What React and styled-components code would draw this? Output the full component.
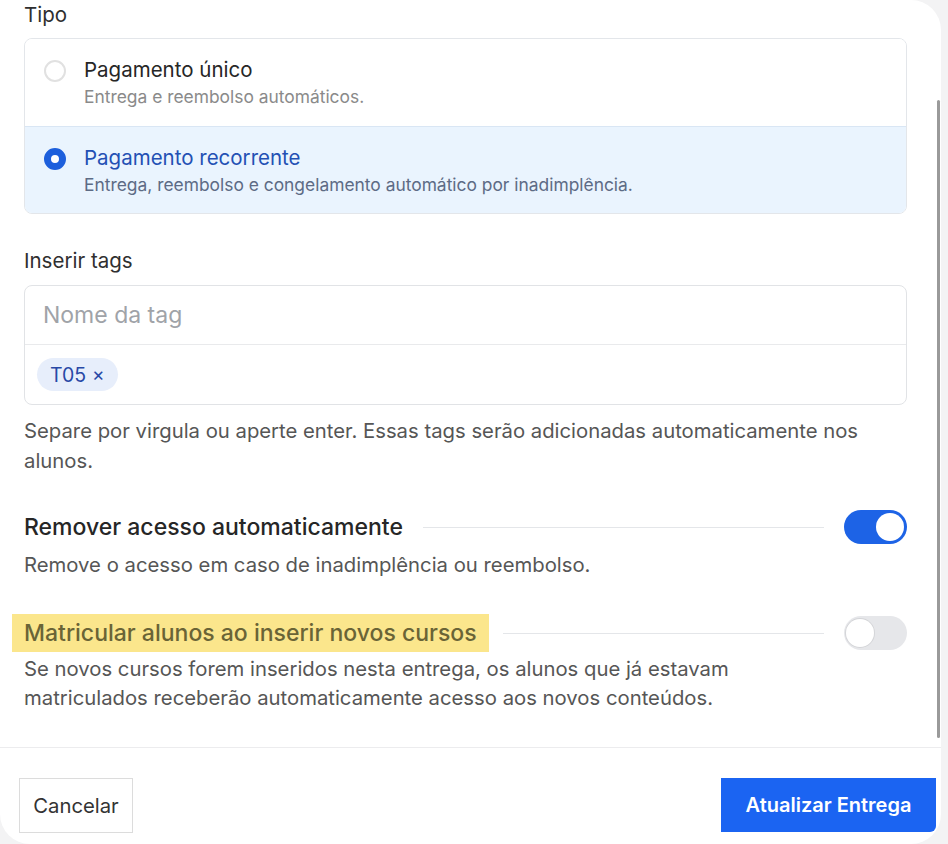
import React, { useState } from 'react';
import styled, { createGlobalStyle } from 'styled-components';

const GlobalStyle = createGlobalStyle`
  html, body {
    margin: 0;
    padding: 0;
    background: #f3f3f4;
  }
  body {
    font-family: Inter, "Noto Sans", "Liberation Sans", sans-serif;
    color: #2b2b2b;
  }
  * { box-sizing: border-box; }
`;

const Panel = styled.div`
  position: relative;
  width: 941px;
  height: 844px;
  background: #ffffff;
  border-radius: 0 30px 30px 30px;
  display: flex;
  flex-direction: column;
  overflow: hidden;
`;

const Body = styled.div`
  flex: 1;
  padding: 3px 34px 0 24px;
`;

const Label = styled.div`
  font-size: 20.5px;
  line-height: 24px;
  color: #2f2f2f;
  margin-top: ${p => p.$mt || 0}px;
  margin-bottom: ${p => p.$mb || 11}px;
`;

const OptionGroup = styled.div`
  border: 1px solid #e3e6ea;
  border-radius: 8px;
  overflow: hidden;
`;

const Option = styled.div`
  display: flex;
  gap: 18px;
  padding: 18px 18px 16px 19px;
  height: 87px;
  background: ${p => (p.$selected ? '#eaf4fe' : '#ffffff')};
  border-top: ${p => (p.$first ? 'none' : '1px solid #d9e6f4')};
  cursor: pointer;
`;

const Radio = styled.span`
  flex: none;
  width: 22px;
  height: 22px;
  margin-top: 3px;
  border-radius: 50%;
  border: ${p => (p.$checked ? '7px solid #1d5fdc' : '2px solid #e1e1e1')};
  background: #fff;
`;

const OptionText = styled.div`
  display: flex;
  flex-direction: column;
  gap: 3px;
`;

const OptionTitle = styled.div`
  font-size: 20.5px;
  line-height: 26px;
  color: ${p => (p.$selected ? '#2350b4' : '#262626')};
`;

const OptionDesc = styled.div`
  font-size: 17.4px;
  line-height: 22px;
  color: ${p => (p.$selected ? '#5d6b85' : '#8a8a8a')};
`;

const TagBox = styled.div`
  border: 1px solid #e1e3e6;
  border-radius: 8px;
`;

const TagInput = styled.input`
  display: block;
  width: 100%;
  height: 59px;
  border: none;
  border-bottom: 1px solid #e9eaec;
  background: transparent;
  padding: 0 18px;
  font-family: inherit;
  font-size: 23px;
  color: #333;
  outline: none;
  &::placeholder { color: #a0a3a8; }
`;

const TagRow = styled.div`
  height: 59px;
  display: flex;
  align-items: center;
  padding: 0 12px;
`;

const Chip = styled.span`
  display: inline-flex;
  align-items: center;
  gap: 6px;
  height: 33px;
  padding: 0 13px;
  border-radius: 17px;
  background: #e7eefb;
  color: #2848a6;
  font-size: 19.5px;
`;

const ChipX = styled.span`
  font-size: 19px;
  line-height: 1;
`;

const Help = styled.p`
  margin: ${p => p.$mt || 0}px 0 0;
  max-width: ${p => p.$max || 882}px;
  font-size: 20.3px;
  line-height: ${p => p.$lh || 30}px;
  color: #565656;
`;

const SettingRow = styled.div`
  display: flex;
  align-items: center;
  height: 38px;
  margin-top: ${p => p.$mt}px;
`;

const SettingTitle = styled.span`
  font-size: 23px;
  font-weight: 500;
  line-height: 38px;
  padding: 0 12px;
  margin-left: -12px;
  color: ${p => (p.$highlight ? '#6a6436' : '#262626')};
  background: ${p => (p.$highlight ? '#fbe68c' : 'transparent')};
  white-space: nowrap;
`;

const Rule = styled.span`
  flex: 1;
  height: 1px;
  background: #e4e6e9;
  margin: 0 20px 0 ${p => (p.$highlight ? 14 : 8)}px;
`;

const Track = styled.button`
  flex: none;
  position: relative;
  width: 63px;
  height: 34px;
  border-radius: 17px;
  border: none;
  padding: 0;
  cursor: pointer;
  background: ${p => (p.$on ? '#1d63e6' : '#e6e7ea')};
`;

const Knob = styled.span`
  position: absolute;
  top: 3px;
  left: ${p => (p.$on ? 32 : 2)}px;
  width: 28px;
  height: 28px;
  border-radius: 50%;
  background: #fff;
  box-shadow: 0 0 0 1px ${p => (p.$on ? 'transparent' : '#d4d5d8')};
`;

const Footer = styled.div`
  height: 97px;
  border-top: 1.5px solid #ececee;
  display: flex;
  justify-content: space-between;
  align-items: flex-start;
  padding: 30px 5px 0 19px;
`;

const CancelButton = styled.button`
  width: 114px;
  height: 55px;
  background: #fff;
  border: 1.5px solid #dcdcdc;
  font-family: inherit;
  font-size: 20.3px;
  color: #333;
  cursor: pointer;
`;

const PrimaryButton = styled.button`
  width: 215px;
  height: 54px;
  background: #1b64f2;
  border: none;
  border-radius: 0 0 6px 0;
  font-family: inherit;
  font-size: 20px;
  font-weight: 600;
  color: #fff;
  cursor: pointer;
`;

const Scrollbar = styled.div`
  position: absolute;
  top: 100px;
  right: 1px;
  width: 3px;
  height: 638px;
  background: #9a9a9a;
  border-radius: 2px;
`;

function Toggle({ on, onClick }) {
  return (
    <Track $on={on} onClick={onClick} aria-pressed={on}>
      <Knob $on={on} />
    </Track>
  );
}

export default function App() {
  const [tipo, setTipo] = useState('recorrente');
  const [remover, setRemover] = useState(true);
  const [matricular, setMatricular] = useState(false);

  const options = [
    { id: 'unico', title: 'Pagamento único', desc: 'Entrega e reembolso automáticos.' },
    { id: 'recorrente', title: 'Pagamento recorrente', desc: 'Entrega, reembolso e congelamento automático por inadimplência.' },
  ];

  return (
    <>
      <GlobalStyle />
      <Panel>
        <Body>
          <Label>Tipo</Label>
          <OptionGroup>
            {options.map((o, i) => (
              <Option
                key={o.id}
                $first={i === 0}
                $selected={tipo === o.id}
                onClick={() => setTipo(o.id)}
              >
                <Radio $checked={tipo === o.id} />
                <OptionText>
                  <OptionTitle $selected={tipo === o.id}>{o.title}</OptionTitle>
                  <OptionDesc $selected={tipo === o.id}>{o.desc}</OptionDesc>
                </OptionText>
              </Option>
            ))}
          </OptionGroup>

          <Label $mt={35} $mb={12}>Inserir tags</Label>
          <TagBox>
            <TagInput placeholder="Nome da tag" />
            <TagRow>
              <Chip>T05 <ChipX>×</ChipX></Chip>
            </TagRow>
          </TagBox>
          <Help $mt={11}>
            Separe por virgula ou aperte enter. Essas tags serão adicionadas automaticamente nos alunos.
          </Help>

          <SettingRow $mt={32}>
            <SettingTitle>Remover acesso automaticamente</SettingTitle>
            <Rule />
            <Toggle on={remover} onClick={() => setRemover(!remover)} />
          </SettingRow>
          <Help $mt={4}>Remove o acesso em caso de inadimplência ou reembolso.</Help>

          <SettingRow $mt={34}>
            <SettingTitle $highlight>Matricular alunos ao inserir novos cursos</SettingTitle>
            <Rule $highlight />
            <Toggle on={matricular} onClick={() => setMatricular(!matricular)} />
          </SettingRow>
          <Help $mt={2} $lh={29} $max={760}>
            Se novos cursos forem inseridos nesta entrega, os alunos que já estavam matriculados receberão automaticamente acesso aos novos conteúdos.
          </Help>
        </Body>
        <Footer>
          <CancelButton>Cancelar</CancelButton>
          <PrimaryButton>Atualizar Entrega</PrimaryButton>
        </Footer>
        <Scrollbar />
      </Panel>
    </>
  );
}
